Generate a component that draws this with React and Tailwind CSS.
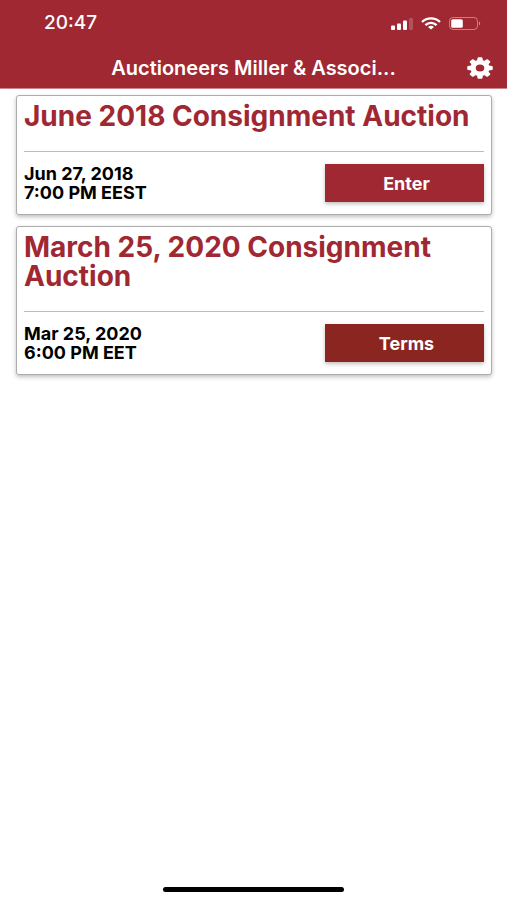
import React from 'react';

const auctions = [
    {
        id: 1,
        title: 'June 2018 Consignment Auction',
        date: 'Jun 27, 2018',
        time: '7:00 PM EEST',
        action: 'Enter',
        buttonStyles: 'bg-[#9f2833]',
    },
    {
        id: 2,
        title: 'March 25, 2020 Consignment Auction',
        date: 'Mar 25, 2020',
        time: '6:00 PM EET',
        action: 'Terms',
        buttonStyles: 'bg-[#8b2520]',
    },
];

const SignalIcon = () => (
    <svg viewBox="0 0 22 12" className="w-[22px] h-3" fill="#fff">
        <rect x="0" y="7.5" width="4" height="4.5" rx="1" />
        <rect x="6" y="5.5" width="4" height="6.5" rx="1" />
        <rect x="12" y="2.5" width="4" height="9.5" rx="1" />
        <rect x="18" y="0" width="4" height="12" rx="1" opacity="0.2" />
    </svg>
);

const WifiIcon = () => (
    <svg viewBox="0 0 20 13" className="w-5 h-[13px]" fill="none" stroke="#fff" strokeWidth="2.4">
        <path d="M1 5C6 0.1 14 0.1 19 5" />
        <path d="M4.4 8.2C7.6 5.1 12.4 5.1 15.6 8.2" />
        <path d="M10 12.6L7 9.9C8.7 8.3 11.3 8.3 13 9.9Z" fill="#fff" stroke="none" />
    </svg>
);

const BatteryIcon = () => (
    <svg viewBox="0 0 32 13" className="w-8 h-[13px]">
        <rect x="0.5" y="0.5" width="28" height="12" rx="3.5" fill="none" stroke="#fff" strokeOpacity="0.4" />
        <rect x="2.2" y="2.2" width="11.6" height="8.6" rx="1.6" fill="#fff" />
        <path d="M30 4.6C31.6 5.2 31.6 7.8 30 8.4Z" fill="#fff" fillOpacity="0.5" />
    </svg>
);

const GearIcon = () => (
    <svg viewBox="0 0 26 22" className="w-[26px] h-[22px]" fill="#fff">
        <g transform="translate(13 11) scale(1.18 1)">
            {[0, 45, 90, 135, 180, 225, 270, 315].map((angle) => (
                <path key={angle} transform={`rotate(${angle})`} d="M-2.6 -7L-2 -10.2Q-1.9 -10.8 -1.3 -10.8H1.3Q1.9 -10.8 2 -10.2L2.6 -7Z" />
            ))}
            <path fillRule="evenodd" d="M0 -8.1A8.1 8.1 0 1 1 0 8.1A8.1 8.1 0 1 1 0 -8.1ZM0 -3.6A3.6 3.6 0 1 0 0 3.6A3.6 3.6 0 1 0 0 -3.6Z" />
        </g>
    </svg>
);

const AuctionCard = ({ auction }) => (
    <article className="rounded-[3px] border border-[#adadad] bg-white px-[7px] pt-[6px] pb-3 shadow-[0_2px_4px_rgba(0,0,0,0.25)]">
        <h2 className="text-[28px] leading-[29px] font-bold text-[#9f2833]">{auction.title}</h2>
        <hr className="mt-5 mb-3 border-[#bcbcbc]" />
        <div className="flex items-center justify-between">
            <div className="text-[18px] leading-[19px] font-bold text-black">
                <p>{auction.date}</p>
                <p>{auction.time}</p>
            </div>
            <button
                type="button"
                className={`h-[38px] w-1/3 min-w-[159px] pl-1 text-[18px] font-bold text-white shadow-[0_2px_4px_rgba(0,0,0,0.25)] ${auction.buttonStyles}`}
            >
                {auction.action}
            </button>
        </div>
    </article>
);

const App = () => {
    return (
        <div className="flex min-h-screen flex-col bg-white font-['Inter',sans-serif]">
            <header className="border-b border-[#c9858b] bg-[#9f2833] text-white">
                <div className="flex h-[47px] items-center justify-between pr-[26px] pl-11">
                    <span className="text-[19px] font-medium">20:47</span>
                    <div className="flex items-center gap-2">
                        <SignalIcon />
                        <WifiIcon />
                        <BatteryIcon />
                    </div>
                </div>
                <div className="grid h-[41px] grid-cols-[1fr_auto_1fr] items-center px-[14px]">
                    <h1 className="col-start-2 text-[20px] font-semibold">Auctioneers Miller &amp; Associ...</h1>
                    <button type="button" aria-label="Settings" className="justify-self-end">
                        <GearIcon />
                    </button>
                </div>
            </header>

            <main className="flex flex-1 flex-col gap-[11px] pr-[15px] pl-4 pt-[6px]">
                {auctions.map((auction) => (
                    <AuctionCard key={auction.id} auction={auction} />
                ))}
            </main>

            {/* Home indicator */}
            <footer className="flex justify-center pb-2">
                <div className="h-[5px] w-[181px] rounded-full bg-black" />
            </footer>
        </div>
    );
};

export default App;
